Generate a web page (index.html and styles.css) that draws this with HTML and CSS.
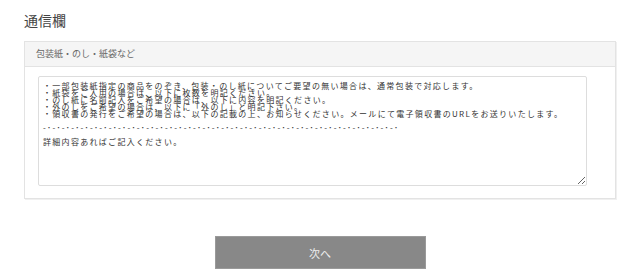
FILE: index.html
```html
<!DOCTYPE html>
<html lang="ja">
<head>
  <meta charset="UTF-8" />
  <title>通信欄</title>
  <link rel="stylesheet" href="styles.css">
</head>
<body>

  <h2 class="section-title">通信欄</h2>

  <div class="panel">
    <div class="panel-heading">包装紙・のし・紙袋など</div>
    <div class="panel-body">
      <textarea class="message" name="message">・一部包装紙指定の商品をのぞき、包装・のし紙についてご要望の無い場合は、通常包装で対応します。
・紙袋をご入用の場合は、以下に枚数を明記ください。
・のし紙に名前記入をご希望の場合は、以下に内容を明記ください。
・外のしをご希望の場合は、以下に「外のし」と明記下さい。
・領収書の発行をご希望の場合は、以下の記載の上、お知らせください。メールにて電子領収書のURLをお送りいたします。

-･-･-･-･-･-･-･-･-･-･-･-･-･-･-･-･-･-･-･-･-･-･-･-･-･-･-･-･-･-･-･-･-･-･-･-･-･-･

詳細内容あればご記入ください。</textarea>
    </div>
  </div>

  <div class="actions">
    <button type="button" class="btn-next">次へ</button>
  </div>

</body>
</html>
```

FILE: styles.css
```css
body {
  margin: 0;
  padding: 0 24px;
  background-color: #fff;
  color: #333;
  font-family: "Noto Sans CJK JP", "Noto Sans", sans-serif;
}
.section-title {
  margin: 10px 0 11px;
  font-size: 14px;
  font-weight: normal;
  line-height: 20px;
  color: #444;
}
.panel {
  width: 592px;
  box-sizing: border-box;
  border: 1px solid #e3e3e3;
  box-shadow: 1px 1px 0 #f0f0f0;
}
.panel-heading {
  height: 24px;
  line-height: 24px;
  padding: 0 11px;
  background-color: #f5f5f5;
  border-bottom: 1px solid #e3e3e3;
  font-size: 9px;
  color: #666;
}
.panel-body {
  padding: 9px 0 12px 13px;
}
.message {
  display: block;
  width: 549px;
  height: 110px;
  box-sizing: border-box;
  margin: 0;
  padding: 5px 4px;
  border: 1px solid #ddd;
  border-radius: 2px;
  font-family: "Noto Sans CJK JP", sans-serif;
  font-size: 8px;
  line-height: 7px;
  letter-spacing: 1.3px;
  color: #333;
  resize: both;
}
.actions {
  display: flex;
  justify-content: center;
  margin-top: 37px;
}
.btn-next {
  width: 211px;
  height: 33px;
  border: 1px solid #9a9a9a;
  background-color: #888;
  color: #eee;
  font-family: "Noto Sans CJK JP", sans-serif;
  font-size: 11px;
  cursor: pointer;
}
```
